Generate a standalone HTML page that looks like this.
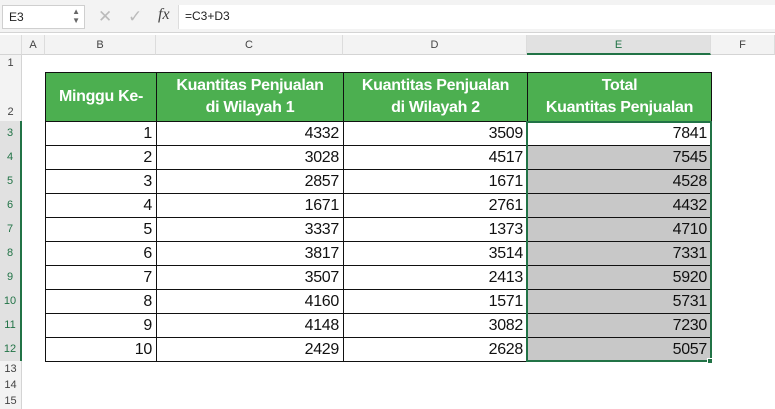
<!DOCTYPE html>
<html><head><style>
*{margin:0;padding:0;box-sizing:border-box}
body{width:775px;height:409px;background:#fff;font-family:"Liberation Sans",Arial,sans-serif;position:relative;overflow:hidden}
.a{position:absolute}
.top{left:0;top:0;width:775px;height:33px;background:#f3f3f3;border-bottom:1px solid #d4d4d4}
.nb{left:2px;top:5px;width:83px;height:24px;background:#fff;border:1px solid #cfcfcf;font-size:12px;padding:4px 6px;color:#222}
.fb{left:178px;top:5px;width:597px;height:24px;background:#fff;font-size:12px;padding:4px 6px;color:#222;border-left:1px solid #ddd}
.colh{top:35px;height:20px;background:#f3f3f3;border-bottom:1px solid #d4d4d4;border-right:1px solid #dcdcdc;font-size:11px;color:#444;text-align:center;line-height:20px}
.rowh{left:0;width:22px;background:#f3f3f3;border-right:1px solid #d4d4d4;font-size:11px;color:#444;text-align:center}
table{position:absolute;left:45px;top:72px;border-collapse:collapse}
td{border:1.5px solid #111;font-size:16px;text-align:right;padding:0 4px 0 0;height:24px;line-height:22px;color:#111;letter-spacing:-0.3px}
th{background:#4caf50;color:#fff;font-size:16px;font-weight:bold;border:1.5px solid #111;height:49px;line-height:22px;text-align:center;letter-spacing:-0.3px}
td.g{background:#c8c8c8}
</style></head><body>
<div class="a top"></div>
<div class="a nb">E3<span style="position:absolute;right:4px;top:1px;font-size:8px;color:#666;line-height:9px">▲<br>▼</span></div>
<div class="a" style="left:98px;top:7px;font-size:17px;color:#bbb">✕</div>
<div class="a" style="left:128px;top:7px;font-size:17px;color:#bbb">✓</div>
<div class="a" style="left:158px;top:6px;font-size:16px;font-style:italic;font-family:'Liberation Serif',serif;color:#444">fx</div>
<div class="a fb">=C3+D3</div>
<div class="a" style="left:0;top:33px;width:775px;height:2px;background:#fff"></div>
<div class="a colh" style="left:0;width:22px"></div>
<div class="a colh" style="left:22px;width:23px">A</div>
<div class="a colh" style="left:45px;width:111px">B</div>
<div class="a colh" style="left:156px;width:187px">C</div>
<div class="a colh" style="left:343px;width:184px">D</div>
<div class="a colh" style="left:527px;width:184px;background:#e1e1e1;border-bottom:2px solid #217346;color:#217346">E</div>
<div class="a colh" style="left:711px;width:64px">F</div>
<div class="a rowh" style="top:55px;height:17px;line-height:17px">1</div>
<div class="a rowh" style="top:72px;height:49px;line-height:80px">2</div>
<div class="a rowh" style="top:121px;height:240px;background:#e1e1e1;border-right:2px solid #217346"></div>
<div class="a" style="left:0;top:121px;width:20px;font-size:11px;color:#217346;text-align:center;line-height:24px">3<br>4<br>5<br>6<br>7<br>8<br>9<br>10<br>11<br>12</div>
<div class="a rowh" style="top:361px;height:48px;line-height:16px">13<br>14<br>15</div>
<table>
<tr><th style="width:111px">Minggu Ke-</th><th style="width:187px">Kuantitas Penjualan<br>di Wilayah 1</th><th style="width:184px">Kuantitas Penjualan<br>di Wilayah 2</th><th style="width:184px">Total<br>Kuantitas Penjualan</th></tr>
<tr><td>1</td><td>4332</td><td>3509</td><td>7841</td></tr>
<tr><td>2</td><td>3028</td><td>4517</td><td class="g">7545</td></tr>
<tr><td>3</td><td>2857</td><td>1671</td><td class="g">4528</td></tr>
<tr><td>4</td><td>1671</td><td>2761</td><td class="g">4432</td></tr>
<tr><td>5</td><td>3337</td><td>1373</td><td class="g">4710</td></tr>
<tr><td>6</td><td>3817</td><td>3514</td><td class="g">7331</td></tr>
<tr><td>7</td><td>3507</td><td>2413</td><td class="g">5920</td></tr>
<tr><td>8</td><td>4160</td><td>1571</td><td class="g">5731</td></tr>
<tr><td>9</td><td>4148</td><td>3082</td><td class="g">7230</td></tr>
<tr><td>10</td><td>2429</td><td>2628</td><td class="g">5057</td></tr>
</table>
<div class="a" style="left:526px;top:121px;width:186px;height:241px;border:2px solid #217346"></div>
<div class="a" style="left:707px;top:358px;width:6px;height:6px;background:#217346;border:1px solid #fff"></div>
</body></html>
